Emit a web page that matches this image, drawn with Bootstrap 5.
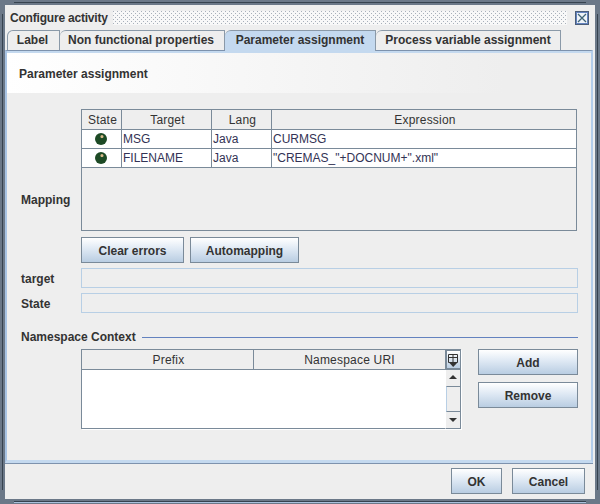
<!DOCTYPE html>
<html lang="en">
<head>
    <meta charset="UTF-8">
    <title>Configure activity</title>
    <link href="https://cdn.jsdelivr.net/npm/bootstrap@5.3.3/dist/css/bootstrap.min.css" rel="stylesheet">
    <script src="https://cdn.jsdelivr.net/npm/bootstrap@5.3.3/dist/js/bootstrap.bundle.min.js"></script>
    <style>
        html, body {
            width: 600px;
            height: 504px;
            overflow: hidden;
        }
        body {
            /* frame lines of the window decoration */
            background:
                linear-gradient(#36424f, #36424f) 14px 2px / 572px 1px no-repeat,
                linear-gradient(#36424f, #36424f) 14px 501px / 572px 1px no-repeat,
                linear-gradient(#a9c0dc, #a9c0dc) 14px 502px / 572px 1px no-repeat,
                linear-gradient(#36424f, #36424f) 2px 14px / 1px 476px no-repeat,
                linear-gradient(#36424f, #36424f) 597px 14px / 1px 476px no-repeat,
                #6b7888;
            font-family: "Liberation Sans", Arial, sans-serif;
            font-size: 12px;
            line-height: 14px;
            color: #333;
            padding: 5px;
        }
        .win {
            width: 590px;
            height: 494px;
            background-color: #eeeeee;
        }
        .win-title {
            height: 25px;
            padding: 0 6px 0 5px;
            font-weight: bold;
        }
        .win-name {
            letter-spacing: -0.2px;
        }
        .win-dots {
            height: 14px;
            margin-left: 1px;
            background:
                radial-gradient(circle at 0.5px 0.5px, #a8b0ba 0.7px, transparent 0.8px) 0 0 / 4px 4px,
                radial-gradient(circle at 0.5px 0.5px, #a8b0ba 0.7px, transparent 0.8px) 2px 2px / 4px 4px,
                #f8f8f8;
        }
        .jtabs {
            height: 20px;
            padding-left: 2px;
        }
        .jtab {
            height: 20px;
            border: 1px solid #8a99a8;
            border-bottom: 0;
            border-left-width: 0;
            border-top-left-radius: 6px;
            font-weight: bold;
            line-height: 19px;
            text-align: center;
            background: #eeeeee;
        }
        .jtab-label { width: 53px; border-left-width: 1px; padding-right: 2px; }
        .jtab-nonfunc { width: 165px; padding-right: 2px; }
        .jtab-param {
            position: relative;
            z-index: 1;
            width: 151px;
            height: 21px;
            background: #c4d9ef;
        }
        .jtab-process { width: 185px; }
        .jtab-pane {
            width: 588px;
            height: 413px;
            border-top: 1px solid #7d92ad;
            border-left: 2px solid #a9c4e4;
            border-right: 2px solid #b4cdea;
            border-bottom: 3px solid #c4d9ef;
            box-shadow: 0 1px 0 #7d92ad;
        }
        .pane-head {
            height: 42px;
            padding: 14px 0 0 12px;
            font-weight: bold;
            background: linear-gradient(90deg, #ffffff 0%, #eeeeee 85%);
            border-top: 2px solid #c4d9ef;
        }
        .pane-body {
            padding: 16px 13px 0 14px;
        }
        .field-label {
            width: 60px;
            flex: none;
            font-weight: bold;
            padding-top: 1px;
        }
        .mapping-label {
            margin-top: 58px;
        }
        .jtable-wrap {
            width: 496px;
            height: 122px;
            border: 1px solid #7a8a99;
        }
        .grid-head, .grid-row {
            display: grid;
            grid-template-columns: 40px 90px 60px 1fr;
        }
        .grid-head {
            height: 20px;
            border-bottom: 1px solid #7a8a99;
        }
        .grid-head > div {
            padding-left: 2px;
            text-align: center;
            line-height: 21px;
            letter-spacing: 0.2px;
            border-right: 1px solid #7a8a99;
        }
        .grid-row {
            height: 19px;
            background: #fff;
            border-bottom: 1px solid #7a8a99;
        }
        .grid-row > div {
            padding-left: 1px;
            line-height: 19px;
            color: #333355;
            border-right: 1px solid #7a8a99;
        }
        .grid-head > div:last-child, .grid-row > div:last-child {
            border-right: 0;
        }
        .grid-row > .state-cell {
            padding-left: 13px;
            padding-top: 3px;
        }
        .state-dot {
            width: 12px;
            height: 12px;
            border-radius: 50%;
            background: radial-gradient(circle at 58% 30%, #d8b98a 0 1px, #1d4a25 2px, #1d4a25 100%);
        }
        .jbtn {
            height: 26px;
            padding: 1px 0 0 0;
            border: 1px solid #7a8a99;
            border-radius: 0;
            font-size: 12px;
            font-weight: bold;
            line-height: 24px;
            color: #333;
            background: linear-gradient(180deg, #ffffff 0%, #dfe9f4 45%, #b9cde2 100%);
        }
        .btn-clear { width: 103px; }
        .btn-auto { width: 109px; }
        .btn-side { width: 100px; }
        .btn-side + .btn-side { margin-top: 7px; }
        .btn-ok { width: 51px; }
        .btn-cancel { width: 73px; }
        .btn-row {
            gap: 6px;
            margin: 6px 0 0 60px;
        }
        .input-row {
            margin-top: 5px;
        }
        .jinput {
            height: 20px;
            border: 1px solid #b8cfe5;
            background: #eeeeee;
        }
        .ns-heading {
            gap: 6px;
            margin-top: 17px;
            font-weight: bold;
        }
        .ns-rule {
            height: 1px;
            background: #6382bf;
        }
        .ns-row {
            margin-top: 5px;
            margin-left: 60px;
        }
        .ns-table {
            width: 380px;
            height: 80px;
            border-left: 1px solid #7a8a99;
            border-top: 1px solid #7a8a99;
            box-shadow: 1px 1px 0 #fff;
        }
        .ns-head {
            height: 20px;
            border-bottom: 1px solid #7a8a99;
        }
        .ns-col {
            line-height: 21px;
            text-align: center;
            letter-spacing: 0.2px;
        }
        .ns-col-prefix {
            width: 172px;
            padding-left: 2px;
            border-right: 1px solid #7a8a99;
        }
        .ns-corner {
            width: 16px;
            height: 20px;
            flex: none;
            border: 2px solid #7a8a99;
            border-top-width: 1px;
            border-right-width: 1px;
            background: linear-gradient(180deg, #ffffff 0%, #b9cde2 100%);
            line-height: 0;
        }
        .ns-main {
            height: 59px;
            background: #fff;
            border-bottom: 1px solid #7a8a99;
        }
        .ns-scroll {
            width: 16px;
            height: 59px;
            flex: none;
            border-left: 1px solid #fff;
            border-right: 1px solid #7a8a99;
            border-bottom: 1px solid #7a8a99;
            background: #eeeeee;
        }
        .scroll-btn {
            height: 16px;
            line-height: 0;
        }
        .scroll-thumb {
            height: 26px;
            border-top: 1px solid #7a8a99;
            border-bottom: 1px solid #7a8a99;
            border-left: 1px solid #b8cfe5;
        }
        .ns-side {
            margin-left: 17px;
        }
        .win-foot {
            gap: 10px;
            height: 36px;
            padding: 5px 10px 0 0;
        }
    </style>
</head>
<body>
<div class="win d-flex flex-column">
    <div class="win-title d-flex align-items-center gap-1">
        <span class="win-name">Configure activity</span>
        <div class="win-dots flex-grow-1"></div>
        <svg class="ms-1" width="14" height="14" viewBox="0 0 14 14">
            <rect x="0.5" y="0.5" width="13" height="13" fill="#fff" stroke="#4a5d78"/>
            <rect x="1.5" y="1.5" width="11" height="11" fill="#eef3f8" stroke="#6382bf"/>
            <path d="M3 3 L11 11 M11 3 L3 11" stroke="#3f6478" stroke-width="1.3" fill="none"/>
        </svg>
    </div>
    <div class="jtabs d-flex align-items-start">
        <div class="jtab jtab-label">Label</div>
        <div class="jtab jtab-nonfunc">Non functional properties</div>
        <div class="jtab jtab-param">Parameter assignment</div>
        <div class="jtab jtab-process">Process variable assignment</div>
    </div>
    <div class="jtab-pane">
        <div class="pane-head">Parameter assignment</div>
        <div class="pane-body">
            <div class="d-flex align-items-center">
                <div class="field-label mapping-label">Mapping</div>
                <div class="jtable-wrap">
                    <div class="grid-head">
                        <div>State</div>
                        <div>Target</div>
                        <div>Lang</div>
                        <div>Expression</div>
                    </div>
                    <div class="grid-row">
                        <div class="state-cell"><div class="state-dot"></div></div>
                        <div>MSG</div>
                        <div>Java</div>
                        <div>CURMSG</div>
                    </div>
                    <div class="grid-row">
                        <div class="state-cell"><div class="state-dot"></div></div>
                        <div>FILENAME</div>
                        <div>Java</div>
                        <div>"CREMAS_"+DOCNUM+".xml"</div>
                    </div>
                </div>
            </div>
            <div class="btn-row d-flex">
                <button type="button" class="btn jbtn btn-clear">Clear errors</button>
                <button type="button" class="btn jbtn btn-auto">Automapping</button>
            </div>
            <div class="input-row d-flex align-items-center">
                <div class="field-label">target</div>
                <div class="jinput flex-grow-1"></div>
            </div>
            <div class="input-row d-flex align-items-center">
                <div class="field-label">State</div>
                <div class="jinput flex-grow-1"></div>
            </div>
            <div class="ns-heading d-flex align-items-center">
                <span>Namespace Context</span>
                <div class="ns-rule flex-grow-1"></div>
            </div>
            <div class="ns-row d-flex">
                <div class="ns-table">
                    <div class="d-flex">
                        <div class="ns-head d-flex flex-grow-1">
                            <div class="ns-col ns-col-prefix">Prefix</div>
                            <div class="ns-col flex-grow-1">Namespace URI</div>
                        </div>
                        <div class="ns-corner">
                            <svg width="13" height="18" viewBox="0 0 13 18">
                                <path d="M1.5 3.5 H10.5 V11.5 H1.5 Z M1.5 6.5 H10.5 M6 3.5 V11.5" fill="none" stroke="#333"/>
                                <path d="M2.5 12 H10 L6.2 16 Z" fill="#333"/>
                            </svg>
                        </div>
                    </div>
                    <div class="d-flex">
                        <div class="ns-main flex-grow-1"></div>
                        <div class="ns-scroll">
                            <div class="scroll-btn">
                                <svg width="14" height="16" viewBox="0 0 14 16"><path d="M3 9 H11 L7 5 Z" fill="#333"/></svg>
                            </div>
                            <div class="scroll-thumb"></div>
                            <div class="scroll-btn">
                                <svg width="14" height="16" viewBox="0 0 14 16"><path d="M3 6 H11 L7 10 Z" fill="#333"/></svg>
                            </div>
                        </div>
                    </div>
                </div>
                <div class="ns-side d-flex flex-column">
                    <button type="button" class="btn jbtn btn-side">Add</button>
                    <button type="button" class="btn jbtn btn-side">Remove</button>
                </div>
            </div>
        </div>
    </div>
    <div class="win-foot d-flex justify-content-end">
        <button type="button" class="btn jbtn btn-ok">OK</button>
        <button type="button" class="btn jbtn btn-cancel">Cancel</button>
    </div>
</div>
</body>
</html>
